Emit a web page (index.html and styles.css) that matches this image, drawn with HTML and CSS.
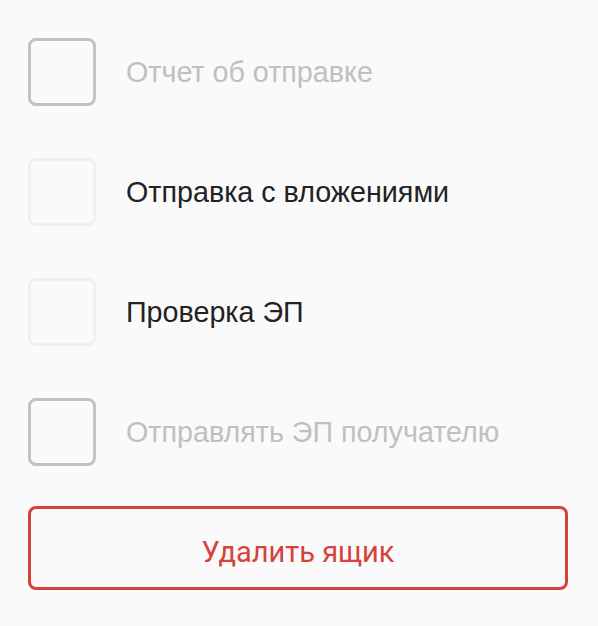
FILE: index.html
```html
<!DOCTYPE html>
<html lang="ru">
<head>
<meta charset="utf-8">
<link rel="stylesheet" href="styles.css">
</head>
<body>
<div class="panel">
  <div class="options">
    <label class="option is-disabled"><span class="box"></span><span class="label">Отчет об отправке</span></label>
    <label class="option is-light"><span class="box"></span><span class="label">Отправка с вложениями</span></label>
    <label class="option is-light"><span class="box"></span><span class="label">Проверка ЭП</span></label>
    <label class="option is-disabled"><span class="box"></span><span class="label">Отправлять ЭП получателю</span></label>
  </div>
  <button class="danger-btn" type="button">Удалить ящик</button>
</div>
</body>
</html>
```
FILE: styles.css
```css
html, body {
  margin: 0;
  padding: 0;
  background: #fafafa;
}
.panel {
  padding: 38px 30px 0 28px;
  display: flex;
  flex-direction: column;
}
.options {
  display: flex;
  flex-direction: column;
  gap: 52px;
}
.option {
  display: flex;
  align-items: center;
  gap: 30px;
  height: 68px;
}
.box {
  box-sizing: border-box;
  width: 68px;
  height: 68px;
  border: 3px solid #c2c2c2;
  border-radius: 8px;
  flex: none;
}
.label {
  font-family: "Liberation Sans", Arial, sans-serif;
  font-size: 28.7px;
  color: #222222;
}
.is-disabled .box { border-color: #c2c2c2; }
.is-disabled .label { color: #c0c0c0; }
.is-light .box { border-color: #f0f0f0; }
.danger-btn {
  margin-top: 40px;
  box-sizing: border-box;
  width: 540px;
  height: 84px;
  border: 3px solid #d8403a;
  border-radius: 8px;
  background: transparent;
  color: #d8403a;
  font-family: Roboto, sans-serif;
  font-size: 29px;
  padding: 8px 0 0;
}
```
